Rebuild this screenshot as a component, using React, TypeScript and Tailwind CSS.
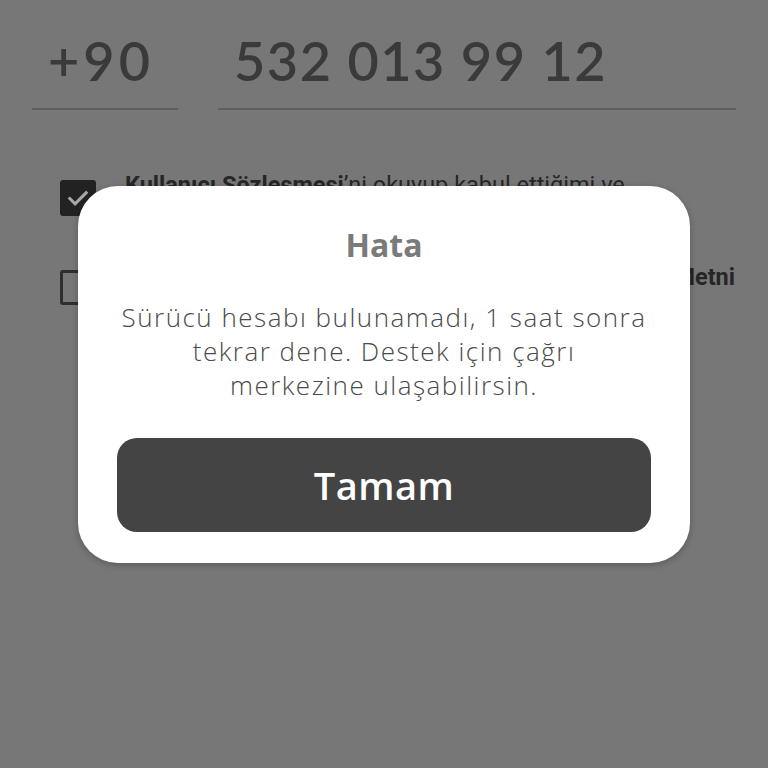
import React from "react";

export default function App() {
  return (
    <div className="relative h-[768px] w-[768px] overflow-hidden bg-[#777777] font-['Open_Sans',sans-serif]">
      <div className="flex gap-10 px-8 pt-[30px] font-['Lato',sans-serif]">
        <div className="w-[146px] border-b-2 border-[#5e5e5e] pb-[16px] pl-4 text-[54px] font-semibold leading-[62px] tracking-[4px] text-[#3a3a3a]">
          +90
        </div>
        <div className="flex-1 border-b-2 border-[#5e5e5e] pb-[16px] pl-4 text-[54px] font-semibold leading-[62px] tracking-[1.5px] text-[#3a3a3a]">
          532 013 99 12
        </div>
      </div>

      <div className="mt-[64px] flex flex-col gap-[52px] pl-[60px] pr-[33px] font-['Roboto',sans-serif] text-[23.5px] leading-[30px] text-[#262626]">
        <div className="flex items-start gap-[29px]">
          <div className="mt-[6px] flex h-[36px] w-[36px] shrink-0 items-center justify-center rounded-[3px] bg-[#222222]">
            <svg viewBox="0 0 24 24" className="h-7 w-7" fill="none" stroke="#a8a8a8" strokeWidth="2.6" strokeLinecap="square">
              <path d="M5 12.5l4.5 4.5L19 7.5" />
            </svg>
          </div>
          <p className="-mt-[4px] whitespace-nowrap">
            <span className="font-bold">Kullanıcı Sözleşmesi</span>’ni okuyup kabul ettiğimi ve
          </p>
        </div>
        <div className="flex items-start gap-[29px]">
          <div className="mt-[2px] h-[35px] w-[35px] shrink-0 rounded-[3px] border-[3px] border-[#2e2e2e]" />
          <p className="-mt-[6px] flex-1 text-right font-bold">Aydınlatma Metni</p>
        </div>
      </div>

      <div className="absolute left-[78px] top-[186px] flex h-[377px] w-[612px] flex-col items-center rounded-[40px] bg-white px-[30px] pt-[36px] shadow-[0_2px_6px_rgba(0,0,0,0.25)]">
        <h2 className="text-[32px] font-bold leading-[46px] text-[#7a7a7a]">Hata</h2>
        <p className="mt-[32px] whitespace-nowrap text-center text-[26px] font-light leading-[34px] tracking-[1.5px] text-[#4a4a4a]">
          Sürücü hesabı bulunamadı, 1 saat sonra
          <br />
          tekrar dene. Destek için çağrı
          <br />
          merkezine ulaşabilirsin.
        </p>
        <button className="mx-[9px] mt-[36px] flex h-[94px] w-[534px] items-center justify-center rounded-[20px] bg-[#444444] text-[38px] font-semibold tracking-[0.5px] text-white">
          Tamam
        </button>
      </div>
    </div>
  );
}
